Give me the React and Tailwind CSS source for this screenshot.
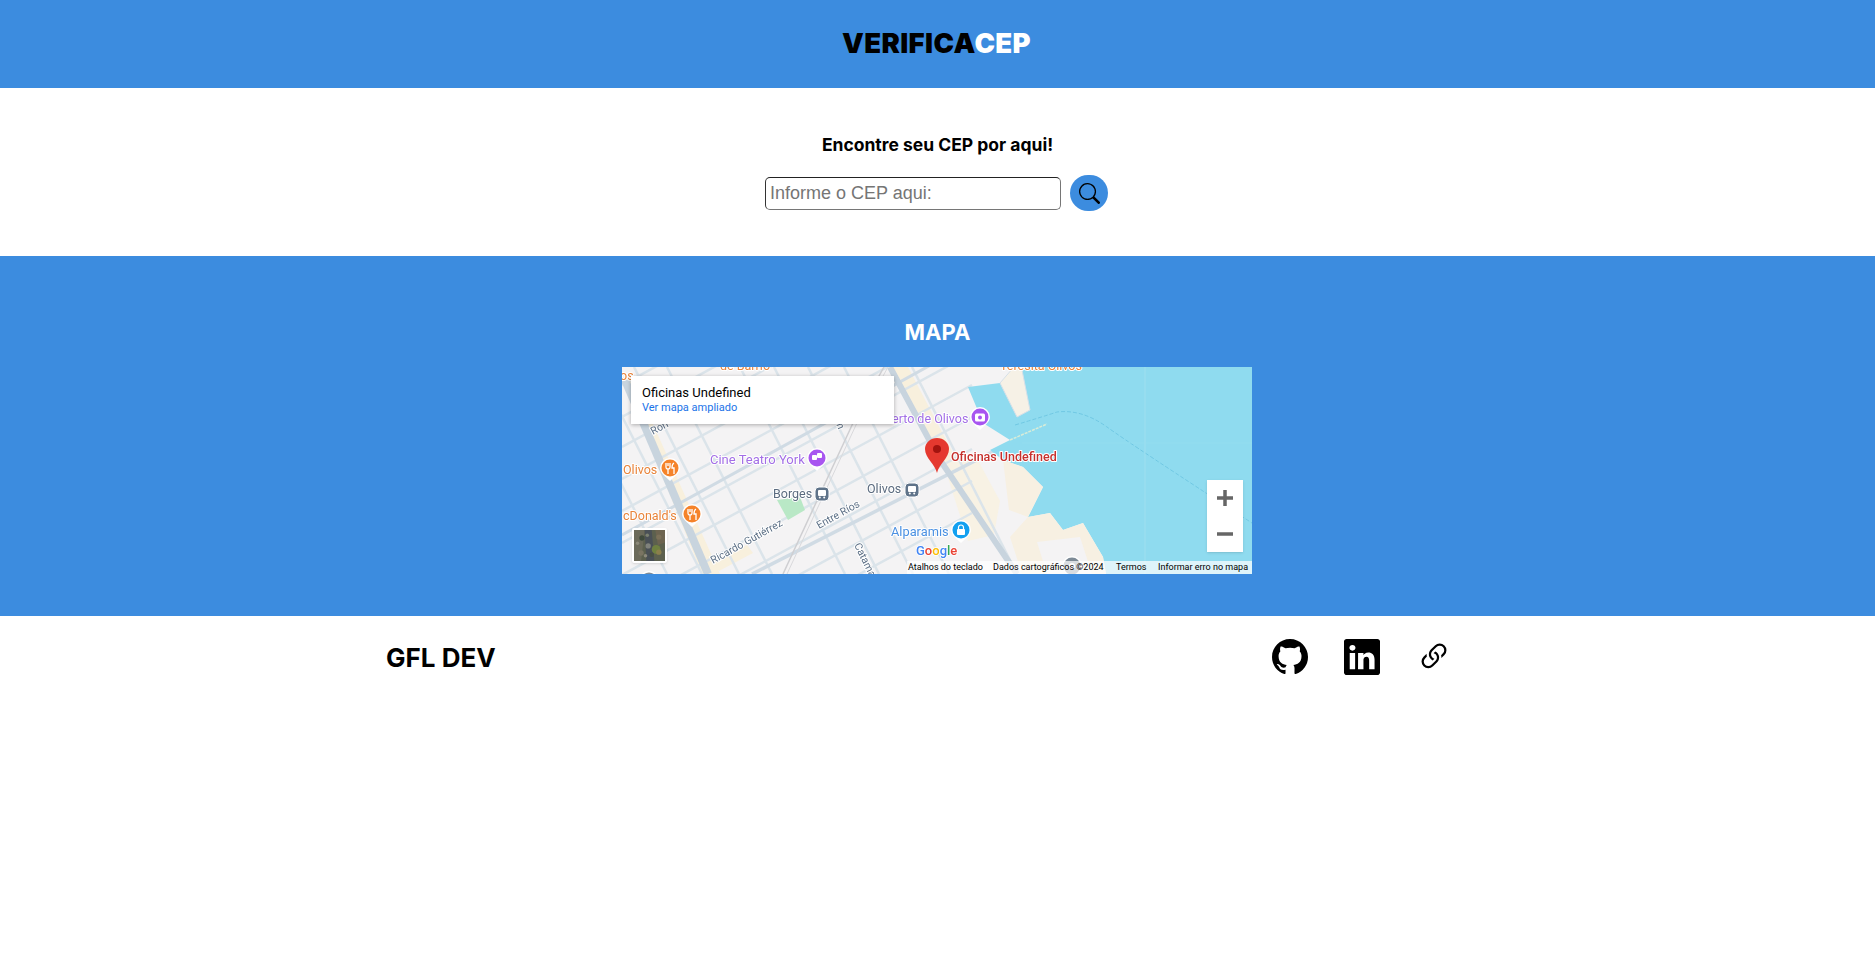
import { BsGithub, BsLinkedin, BsLink45Deg, BsSearch } from "react-icons/bs";

// Street grid of the map, in map pixels.
const steepStreets = [-60, -25, 12, 45, 118, 152, 186, 222, 290];
const crossStreets = [-10, 22, 52, 84, 116, 148, 180, 212, 244, 276, 308];

const orangeLabels = [
  { text: "de Barrio", x: 98, y: 3 },
  { text: "os", x: -2, y: 13 },
  { text: "Olivos", x: 1, y: 107 },
  { text: "cDonald's", x: 1, y: 153 },
  { text: "Teresita Olivos", x: 378, y: 3 },
];

const grayLabels = [
  { text: "Borges", x: 151, y: 131 },
  { text: "Olivos", x: 245, y: 126 },
];

const streetLabels = [
  { text: "Ron", x: 31, y: 68, angle: -29 },
  { text: "Ricardo Gutiérrez", x: 91, y: 197, angle: -29 },
  { text: "Entre Ríos", x: 197, y: 162, angle: -29 },
  { text: "Catamarca", x: 232, y: 178, angle: 64 },
  { text: "on", x: 212, y: 52, angle: 68 },
];

// Mottled patches of the satellite thumbnail.
const satellitePatches = [
  { x: 9, y: 9, r: 3, fill: "#3f4a3c" },
  { x: 16, y: 18, r: 3, fill: "#80827c" },
  { x: 8, y: 26, r: 3, fill: "#7a7462" },
  { x: 4, y: 15, r: 2, fill: "#8b8878" },
  { x: 15, y: 6, r: 2, fill: "#7b8070" },
  { x: 20, y: 28, r: 2.5, fill: "#484f45" },
  { x: 13, y: 29, r: 2, fill: "#8d8a7c" },
  { x: 28, y: 8, r: 3, fill: "#7b7058" },
];

function Pin({ x, y, color, children }) {
  return (
    <g transform={`translate(${x} ${y})`}>
      <path d="M-10 0a10 10 0 0 1 20 0c0 5-5 8-10 13c-5-5-10-8-10-13z" fill="#fff" />
      <circle r="8.5" fill={color} />
      {children}
    </g>
  );
}

function Fork() {
  return (
    <path
      d="M-4-5v4q0 2 2 2v5M-2-5v3M0-5v4q0 2-2 2M4-5q-2 1-2 5h2v6"
      fill="none"
      stroke="#fff"
      strokeWidth="1.3"
    />
  );
}

function Transit({ x, y }) {
  return (
    <g transform={`translate(${x} ${y})`}>
      <rect x="-7" y="-7" width="14" height="14" rx="4" fill="#5f7389" stroke="#fff" strokeWidth="1" />
      <rect x="-4" y="-4" width="8" height="6" rx="1" fill="#fff" />
      <circle cx="-2.2" cy="3.6" r="1" fill="#fff" />
      <circle cx="2.2" cy="3.6" r="1" fill="#fff" />
    </g>
  );
}

function MapDrawing() {
  return (
    <svg viewBox="0 0 630 207" className="block w-full h-full blur-[0.35px] font-['Roboto',sans-serif]">
      <rect width="630" height="207" fill="#f4f3f4" />

      {/* beige blocks along the avenues */}
      <path d="M266 0h20l48 92l-12 8z" fill="#f8f0dd" />
      <path d="M0 10h10l88 197H80z" fill="#f8f0dd" />
      <path d="M322 98l30-12l26 48l-6 34l-26 6z" fill="#f8f2e4" />
      <path d="M91 196l34-18l6 8l-34 18z" fill="#f8f0dd" />

      {steepStreets.map((x) => (
        <line key={x} x1={x} y1="0" x2={x + 105} y2="207" stroke="#dbe4ea" strokeWidth="2.5" />
      ))}
      {crossStreets.map((y) => (
        <line key={y} x1="0" y1={y + 28} x2="350" y2={y - 162} stroke="#dbe4ea" strokeWidth="2.5" />
      ))}
      <path d="M0 168L345 -22" stroke="#d0dbe4" strokeWidth="3" fill="none" />
      <path d="M130 207L400 70" stroke="#d0dbe4" strokeWidth="3.5" fill="none" />

      {/* avenues and rail */}
      <path d="M3 13L86 207" stroke="#c8d4de" strokeWidth="8" fill="none" />
      <path d="M268 0L318 93L395 207" stroke="#c8d4de" strokeWidth="6" fill="none" />
      <path d="M161 207L231 56L262 0" stroke="#cfcfd2" strokeWidth="1.5" fill="none" />
      <path d="M165 207L234 58L266 0" stroke="#d9d9dc" strokeWidth="1" fill="none" />
      <path d="M155 133l23-3l5 13l-17 10z" fill="#b9e8c6" />

      {/* coast */}
      <path
        d="M396 0H630V207H484L481 190L461 156L441 163L428 146L406 150L421 120L401 100L381 93L368 83L388 73L361 56L346 20L378 16z"
        fill="#8fdbef"
      />
      <path d="M381 93L401 100L421 120L406 150L387 143z" fill="#f7f0e2" />
      <path d="M406 150L428 146L441 163L461 156L481 190L484 207H400L388 170z" fill="#f7f0e2" />
      <path d="M415 175L458 170L470 207H425z" fill="#f4f3f4" />
      <path d="M378 16L398 -7L408 43L395 50z" fill="#f6f1e6" stroke="#d6e0e8" />
      <path d="M388 73L425 57" stroke="#d8ecd8" strokeWidth="1.5" strokeDasharray="3 1" fill="none" />
      <path d="M393 58Q420 50 435 45Q460 42 485 60T630 156" stroke="#68c3e0" strokeWidth="0.8" strokeDasharray="4 2" fill="none" />
      <line x1="523" y1="0" x2="523" y2="207" stroke="#a8e2f1" strokeWidth="0.7" />
      <line x1="400" y1="76" x2="630" y2="76" stroke="#9adfef" strokeWidth="0.5" />

      <g fontSize="12.5" paintOrder="stroke" stroke="#fff" strokeWidth="2" strokeLinejoin="round">
        {orangeLabels.map((l) => (
          <text key={l.text} x={l.x} y={l.y} fill="#e8833a">
            {l.text}
          </text>
        ))}
        {grayLabels.map((l) => (
          <text key={l.x} x={l.x} y={l.y} fill="#5b6b7f">
            {l.text}
          </text>
        ))}
        <text x="88" y="97" fontSize="13" fill="#a36fe6">
          Cine Teatro York
        </text>
        <text x="270" y="56" fill="#a36fe6">
          erto de Olivos
        </text>
        <text x="269" y="169" fontSize="12.8" fill="#4a90e2">
          Alparamis
        </text>
        <text x="329" y="94" fill="#c5302c" fontWeight="500">
          Oficinas Undefined
        </text>
      </g>

      <g fontSize="10.5" fill="#5d7086" paintOrder="stroke" stroke="#fff" strokeWidth="2">
        {streetLabels.map((l) => (
          <text key={l.text} x={l.x} y={l.y} transform={`rotate(${l.angle} ${l.x} ${l.y})`}>
            {l.text}
          </text>
        ))}
      </g>

      <Pin x={48} y={101} color="#f5832a">
        <Fork />
      </Pin>
      <Pin x={70} y={147} color="#f5832a">
        <Fork />
      </Pin>
      <Pin x={195} y={91} color="#a855f0">
        <rect x="-5" y="-3" width="5" height="5" rx="1" fill="#fff" />
        <rect x="0" y="-5" width="5" height="5" rx="1" fill="#fff" />
      </Pin>
      <Pin x={358} y={50} color="#a855f0">
        <rect x="-5" y="-3.5" width="10" height="8" rx="1.5" fill="#fff" />
        <circle cy="0.5" r="2" fill="#a855f0" />
      </Pin>
      <Pin x={339} y={163} color="#12a0f0">
        <rect x="-4" y="-1" width="8" height="6" rx="1" fill="#fff" />
        <path d="M-2.5-1v-1.5a2.5 2.5 0 0 1 5 0V-1" fill="none" stroke="#fff" strokeWidth="1.2" />
      </Pin>
      <Transit x={200} y={127} />
      <Transit x={290} y={123} />
      <Pin x={450} y={199} color="#7d8a96">
        <circle r="3" fill="#fff" />
      </Pin>
      <Pin x={27} y={214} color="#7d8a96" />

      {/* place marker */}
      <path d="M315 106c-2-9-12-15-12-24a12 11 0 0 1 24 0c0 9-10 15-12 24z" fill="#e5392f" />
      <circle cx="315" cy="82" r="4" fill="#a3140f" />

      {/* google logo */}
      <text x="294" y="188" fontSize="13" fontWeight="500" paintOrder="stroke" stroke="#fff" strokeWidth="1.5">
        <tspan fill="#4285f4">G</tspan>
        <tspan fill="#ea4335">o</tspan>
        <tspan fill="#fbbc05">o</tspan>
        <tspan fill="#4285f4">g</tspan>
        <tspan fill="#34a853">l</tspan>
        <tspan fill="#ea4335">e</tspan>
      </text>
    </svg>
  );
}

function SatelliteThumb() {
  return (
    <div className="absolute left-[10px] top-[161px] w-[35px] h-[35px] border-2 border-white rounded-[2px] shadow-sm overflow-hidden bg-[#5e6350]">
      <svg viewBox="0 0 35 35" className="block w-full h-full blur-[0.5px]">
        <rect width="35" height="35" fill="#5c604e" />
        <path d="M0 0h12L8 35H0z" fill="#6b6a5a" />
        <path d="M12 0h8l3 35h-9z" fill="#4a5056" />
        <path d="M24 0h11v14l-8 3z" fill="#6d6450" />
        <circle cx="25" cy="22" r="5" fill="#6f8040" />
        <circle cx="28" cy="25" r="3" fill="#8a7f4c" />
        {satellitePatches.map((p) => (
          <circle key={`${p.x}-${p.y}`} cx={p.x} cy={p.y} r={p.r} fill={p.fill} />
        ))}
      </svg>
    </div>
  );
}

function ZoomControl() {
  return (
    <div className="absolute left-[585px] top-[113px] w-[36px] h-[72px] bg-white flex flex-col items-center justify-center shadow-sm">
      <div className="h-[36px] flex items-center justify-center">
        <svg width="18" height="18" viewBox="0 0 18 18">
          <path d="M1 9h16M9 1v16" stroke="#666" strokeWidth="3.5" />
        </svg>
      </div>
      <div className="h-[36px] flex items-center justify-center">
        <svg width="18" height="18" viewBox="0 0 18 18">
          <path d="M1 9h16" stroke="#666" strokeWidth="3.5" />
        </svg>
      </div>
    </div>
  );
}

function MapEmbed() {
  return (
    <div className="relative w-[630px] h-[207px] overflow-hidden">
      <MapDrawing />

      <div className="absolute left-[9px] top-[9px] w-[263px] h-[48px] bg-white shadow-[0_1px_4px_rgba(0,0,0,0.3)] pl-[11px] pt-[9px] font-['Roboto',sans-serif]">
        <p className="text-[13px] leading-[16px] text-black">Oficinas Undefined</p>
        <p className="text-[11px] leading-[14px] text-[#1a73e8]">Ver mapa ampliado</p>
      </div>

      <SatelliteThumb />
      <ZoomControl />

      <div className="absolute right-0 bottom-0 w-[345px] h-[13px] pt-[1px] bg-white/70 flex items-center text-[9px] text-black font-['Roboto',sans-serif] whitespace-nowrap">
        <span className="ml-[1px] w-[85px]">Atalhos do teclado</span>
        <span className="w-[123px]">Dados cartográficos ©2024</span>
        <span className="w-[42px]">Termos</span>
        <span>Informar erro no mapa</span>
      </div>
    </div>
  );
}

export default function App() {
  return (
    <div className="min-h-[971px] bg-white font-['Inter',sans-serif]">
      <header className="h-[88px] bg-[#3c8cdf] flex items-center justify-center">
        <h1 className="mr-[2px] text-[27.5px] font-black tracking-[0.4px]">
          <span className="text-black">VERIFICA</span>
          <span className="text-white">CEP</span>
        </h1>
      </header>

      <section className="h-[168px] flex flex-col items-center pt-[45px]">
        <h2 className="text-[17.5px] leading-[24px] font-bold text-black">Encontre seu CEP por aqui!</h2>
        <div className="mt-[18px] mr-[2px] flex items-center gap-[9px]">
          <input
            type="text"
            placeholder="Informe o CEP aqui:"
            className="w-[296px] h-[33px] pl-[4px] rounded-[5px] border border-[#767676] border-t-[#222] border-l-[#333] text-[18px] font-['Liberation_Sans',sans-serif] placeholder:text-[#757575] outline-none"
          />
          <button className="w-[38px] h-[36px] rounded-full bg-[#3c8cdf] flex items-center justify-center text-black">
            <BsSearch size={21} />
          </button>
        </div>
      </section>

      <section className="h-[360px] bg-[#3c8cdf] flex flex-col items-center pt-[62px]">
        <h2 className="text-[22px] leading-[28px] font-bold text-white">MAPA</h2>
        <div className="mt-[21px] mr-[1px]">
          <MapEmbed />
        </div>
      </section>

      <footer className="h-[82px] pl-[386px] flex items-start pt-[23px]">
        <p className="w-[886px] mt-[1px] text-[26px] leading-[36px] font-bold text-black">GFL DEV</p>
        <div className="flex gap-[36px] text-black">
          <BsGithub size={36} />
          <BsLinkedin size={36} />
          <BsLink45Deg size={36} />
        </div>
      </footer>
    </div>
  );
}
